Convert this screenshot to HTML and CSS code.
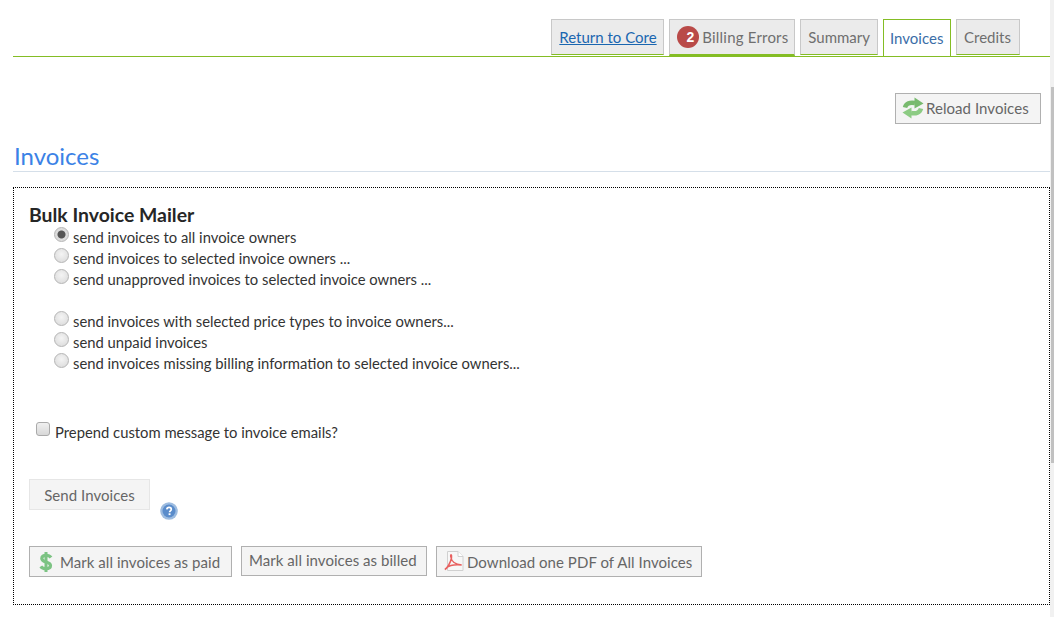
FILE: index.html
```html
<!DOCTYPE html>
<html lang="en">
<head>
<meta charset="utf-8">
<title>Invoices</title>
<link rel="stylesheet" href="styles.css">
</head>
<body>
<div class="page">
  <nav class="tabs">
    <a class="tab tab-link" href="#">Return to Core</a>
    <span class="tab tab-errors"><span class="badge">2</span>Billing Errors</span>
    <span class="tab">Summary</span>
    <span class="tab tab-active">Invoices</span>
    <span class="tab tab-credits">Credits</span>
  </nav>
  <div class="reload-row">
    <button class="btn btn-reload" type="button">
      <svg class="icon-reload" viewBox="0 0 22 22" width="22" height="22" aria-hidden="true">
        <path d="M3 10.500C4 6.500 8 5 13 6" fill="none" stroke="#78ba6e" stroke-width="4.500"/>
        <path d="M12.500 .5L21.500 6.500 12.500 11.500Z" fill="#78ba6e"/>
        <path d="M19 11.500C18 15.500 14 17 9 16" fill="none" stroke="#8ccb83" stroke-width="4.500"/>
        <path d="M9.500 10.500L.5 15.500 9.500 21.500Z" fill="#8ccb83"/>
      </svg>Reload Invoices</button>
  </div>
  <h1 class="title">Invoices</h1>
  <section class="panel">
    <h2 class="panel-title">Bulk Invoice Mailer</h2>
    <div class="options">
      <label class="option"><input class="radio" type="radio" name="mode" checked>send invoices to all invoice owners</label>
      <label class="option"><input class="radio" type="radio" name="mode">send invoices to selected invoice owners ...</label>
      <label class="option"><input class="radio" type="radio" name="mode">send unapproved invoices to selected invoice owners ...</label>
      <div class="option-gap"></div>
      <label class="option"><input class="radio" type="radio" name="mode">send invoices with selected price types to invoice owners...</label>
      <label class="option"><input class="radio" type="radio" name="mode">send unpaid invoices</label>
      <label class="option"><input class="radio" type="radio" name="mode">send invoices missing billing information to selected invoice owners...</label>
    </div>
    <label class="prepend"><input class="check" type="checkbox">Prepend custom message to invoice emails?</label>
    <div class="send-row">
      <button class="btn btn-send" type="button">Send Invoices</button>
      <svg class="icon-help" viewBox="0 0 18 18" width="18" height="18" aria-hidden="true">
        <circle cx="9" cy="9" r="8.800" fill="#9dbce0"/>
        <circle cx="9" cy="9" r="6.500" fill="#5a8ccb"/>
        <path d="M6.800 7.300C7 5.800 8 5.300 9.100 5.300c1.300 0 2.200.8 2.200 1.900 0 1.700-1.700 1.600-1.700 3" fill="none" stroke="#fff" stroke-width="1.700"/>
        <rect x="8.600" y="11.300" width="1.900" height="1.800" fill="#fff"/>
      </svg>
    </div>
    <div class="actions">
      <button class="btn btn-paid" type="button">
        <svg class="icon-dollar" viewBox="0 0 14 22" width="14" height="22" aria-hidden="true">
          <path d="M12 6.500C11 5 9 4.300 7 4.300 4.500 4.300 2.800 5.500 2.800 7.500c0 4.500 8.700 2.500 8.700 7 0 2.100-2 3.200-4.500 3.200-2.200 0-4.200-.8-5.200-2.400" fill="none" stroke="#7cc383" stroke-width="3.200"/>
          <rect x="5.500" y="1" width="3" height="20" fill="#7cc383"/>
        </svg>Mark all invoices as paid</button>
      <button class="btn btn-billed" type="button">Mark all invoices as billed</button>
      <button class="btn btn-pdf" type="button">
        <svg class="icon-pdf" viewBox="0 0 20 20" width="20" height="20" aria-hidden="true">
          <path d="M3.500 .5H14l5 5V19.500H3.500Z" fill="#f7f7f7" stroke="#d0d0d0"/>
          <path d="M14 .5V5.500H19" fill="#fff" stroke="#d0d0d0"/>
          <path d="M.8 18.500C3 17.500 6.500 12 7.500 7 8 3 6.500 3 6.700 5.500c.5 4 4 8 11 8.500-5-.5-12 0-15.500 3" fill="none" stroke="#e8605f" stroke-width="1.500"/>
        </svg>Download one PDF of All Invoices</button>
    </div>
  </section>
  <div class="scrollbar"><div class="scrollbar-thumb"></div></div>
</div>
</body>
</html>
```
FILE: styles.css
```css
* { box-sizing: border-box; }
html, body { margin: 0; height: 100%; overflow: hidden; background: #fff; }
body { font-family: Lato, "Open Sans", sans-serif; font-size: 14.8px; color: #333; }
.page { position: relative; height: 617px; padding: 19px 4px 0 13px; }

.tabs { display: flex; justify-content: flex-end; gap: 5px; height: 38px; padding-right: 30px; border-bottom: 1px solid #84bd24; }
.tab { height: 36px; padding: 0 7px; display: flex; align-items: center; background: #ebebeb; border: 1px solid #c8c8c8; border-bottom: 1px solid #84bd24; color: #6f6f6f; text-decoration: none; font-size: 15px; white-space: nowrap; }
.tab-link { width: 113px; padding: 0 6px 0 7px; color: #1a66b0; text-decoration: underline; }
.tab-errors { width: 126px; height: 37px; padding: 0 0 0 7px; border-bottom: 2px solid #84bd24; letter-spacing: .2px; }
.tab-active { width: 68px; height: 37px; padding: 0 6px; background: #fff; color: #3b6ea8; border: 1px solid #84bd24; border-bottom: 0; }
.tab-credits { width: 64px; }
.badge { width: 22px; height: 22px; margin-right: 3px; border-radius: 50%; background: #b94a48; color: #fff; font: bold 14px "Liberation Sans", sans-serif; display: flex; align-items: center; justify-content: center; padding-left: 4px; flex: none; letter-spacing: 0; }

.reload-row { display: flex; justify-content: flex-end; padding: 36px 9px 0 0; }
.btn { height: 31px; padding: 0; display: flex; align-items: center; background: #f4f4f4; border: 1px solid #b0b0b0; color: #666; font-family: Lato, sans-serif; font-size: 15px; letter-spacing: .05px; }
.btn-reload { width: 146px; padding: 0 0 2px 6px; }
.icon-reload { margin-right: 2px; }

.title { margin: 19px 0 0; height: 29px; padding-left: 1px; border-bottom: 1px solid #d5dfe9; color: #3b82e6; font-size: 24px; font-weight: 400; line-height: 26px; }
.panel { margin-top: 15px; height: 418px; border: 1px dotted #000; padding: 16px 15px 0; }
.panel-title { margin: 0; font-size: 19.4px; font-weight: 700; line-height: 22px; color: #262626; }

.options { padding-left: 24px; }
.option { display: flex; align-items: center; height: 21px; color: #333; }
.option-gap { height: 21px; }
.radio { appearance: none; width: 15px; height: 15px; margin: -5px 4px 0 1px; border-radius: 50%; border: 1px solid #b5b5b5; background: radial-gradient(circle at 50% 40%, #f4f4f4, #d8d8d8); flex: none; }
.radio:checked { background: radial-gradient(circle, #555 0 3.500px, #dcdcdc 4.500px); }

.prepend { display: flex; align-items: center; height: 20px; margin: 49px 0 0 7px; }
.check { appearance: none; width: 14px; height: 14px; margin: -6px 5px 0 0; border: 1px solid #aaa; border-radius: 3px; background: linear-gradient(#f0f0f0, #d8d8d8); flex: none; }

.send-row { display: flex; align-items: flex-end; margin-top: 37px; }
.btn-send { width: 121px; justify-content: center; border-color: #e6e6e6; }
.icon-help { margin: 0 0 -10px 10px; }

.actions { display: flex; align-items: flex-start; gap: 9px; margin-top: 36px; }
.btn-paid { width: 203px; padding-left: 9px; }
.icon-dollar { margin-right: 7px; }
.btn-billed { width: 186px; height: 30px; padding: 0 0 3px 7px; }
.btn-pdf { width: 266px; padding-left: 7px; }
.icon-pdf { margin: -2px 3px 0 0; }

.scrollbar { position: absolute; top: 0; right: 0; bottom: 0; width: 4px; background: #f1f1f1; }
.scrollbar-thumb { position: absolute; top: 87px; left: 1px; right: 0; height: 376px; background: #c1c1c1; }
```
